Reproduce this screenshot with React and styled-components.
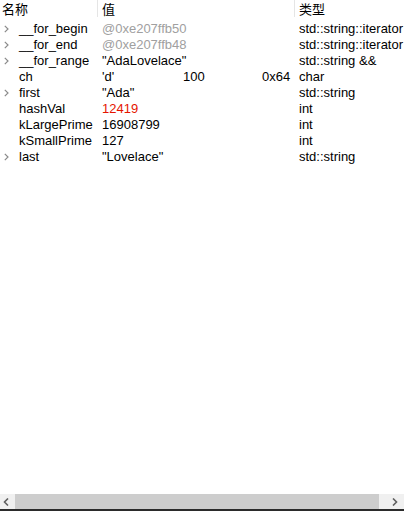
import React from "react";
import styled, { createGlobalStyle } from "styled-components";

const Global = createGlobalStyle`
  html, body { margin: 0; padding: 0; background: #fff; }
  body { font-family: "Liberation Sans", "Noto Sans CJK SC", sans-serif; font-size: 13px; color: #000; }
`;

const Panel = styled.div`
  width: 404px;
  height: 513px;
  display: flex;
  flex-direction: column;
  background: #fff;
  overflow: hidden;
`;

const Table = styled.div`
  flex: 1;
  display: grid;
  grid-template-columns: 98px 197px 109px;
  grid-template-rows: 21px;
  grid-auto-rows: 16px;
  align-content: start;
`;

const HeaderCell = styled.div`
  height: 17px;
  display: flex;
  align-items: center;
  padding-left: ${(p) => p.$pad}px;
  font-family: "Noto Sans CJK SC", sans-serif;
  font-size: 13px;
  line-height: 17px;
  border-right: ${(p) => (p.$sep ? "1px solid #e5e5e5" : "none")};
  box-sizing: border-box;
  white-space: nowrap;
  overflow: hidden;
`;

const HeaderRow = styled.div`
  display: contents;
`;

const Cell = styled.div`
  display: flex;
  align-items: center;
  padding-left: ${(p) => p.$pad || 0}px;
  white-space: nowrap;
  overflow: hidden;
  line-height: 16px;
  color: ${(p) => p.$color || "#000"};
`;

const Chevron = styled.span`
  width: 19px;
  flex: 0 0 19px;
  display: flex;
  align-items: center;
  padding-left: 4px;
  box-sizing: border-box;
`;

const Sub = styled.span`
  display: inline-block;
  width: ${(p) => p.$w}px;
  flex: 0 0 ${(p) => p.$w}px;
`;

const ScrollBar = styled.div`
  height: 15px;
  margin-bottom: 2px;
  display: flex;
  background: #f0f0f0;
  border-bottom: 2px solid #2b2b2b;
`;

const ScrollBtn = styled.div`
  width: ${(p) => p.$w}px;
  flex: 0 0 ${(p) => p.$w}px;
  display: flex;
  align-items: center;
  justify-content: ${(p) => (p.$right ? "flex-end" : "flex-start")};
  padding: 0 6px 0 3px;
  box-sizing: border-box;
`;

const Thumb = styled.div`
  width: 364px;
  flex: 0 0 364px;
  background: #cdcdcd;
`;

const Arrow = ({ dir }) => (
  <svg width="6" height="8" viewBox="0 0 6 8">
    <polyline
      points={dir === "left" ? "5,0.5 1.5,4 5,7.5" : "1,0.5 4.5,4 1,7.5"}
      fill="none"
      stroke="#606060"
      strokeWidth="1.6"
    />
  </svg>
);

const Expander = () => (
  <svg width="5" height="8" viewBox="0 0 5 8">
    <polyline points="0.8,0.8 4,4 0.8,7.2" fill="none" stroke="#8a8a8a" strokeWidth="1.2" />
  </svg>
);

const rows = [
  { name: "__for_begin", value: "@0xe207ffb50", type: "std::string::iterator", exp: true, color: "#a0a0a0" },
  { name: "__for_end", value: "@0xe207ffb48", type: "std::string::iterator", exp: true, color: "#a0a0a0" },
  { name: "__for_range", value: "\"AdaLovelace\"", type: "std::string &&", exp: true },
  { name: "ch", value: ["'d'", "100", "0x64"], type: "char" },
  { name: "first", value: "\"Ada\"", type: "std::string", exp: true },
  { name: "hashVal", value: "12419", type: "int", color: "#e51400" },
  { name: "kLargePrime", value: "16908799", type: "int" },
  { name: "kSmallPrime", value: "127", type: "int" },
  { name: "last", value: "\"Lovelace\"", type: "std::string", exp: true },
];

export default function App() {
  return (
    <>
      <Global />
      <Panel>
        <Table>
          <HeaderRow>
            <HeaderCell $pad={2} $sep>名称</HeaderCell>
            <HeaderCell $pad={4} $sep>值</HeaderCell>
            <HeaderCell $pad={4}>类型</HeaderCell>
          </HeaderRow>
          {rows.map((r) => (
            <React.Fragment key={r.name}>
              <Cell>
                <Chevron>{r.exp ? <Expander /> : null}</Chevron>
                {r.name}
              </Cell>
              <Cell $pad={4} $color={r.color}>
                {Array.isArray(r.value) ? (
                  <>
                    <Sub $w={81}>{r.value[0]}</Sub>
                    <Sub $w={79}>{r.value[1]}</Sub>
                    <span>{r.value[2]}</span>
                  </>
                ) : (
                  r.value
                )}
              </Cell>
              <Cell $pad={4}>{r.type}</Cell>
            </React.Fragment>
          ))}
        </Table>
        <ScrollBar>
          <ScrollBtn $w={15}>
            <Arrow dir="left" />
          </ScrollBtn>
          <Thumb />
          <ScrollBtn $w={25} $right>
            <Arrow dir="right" />
          </ScrollBtn>
        </ScrollBar>
      </Panel>
    </>
  );
}
